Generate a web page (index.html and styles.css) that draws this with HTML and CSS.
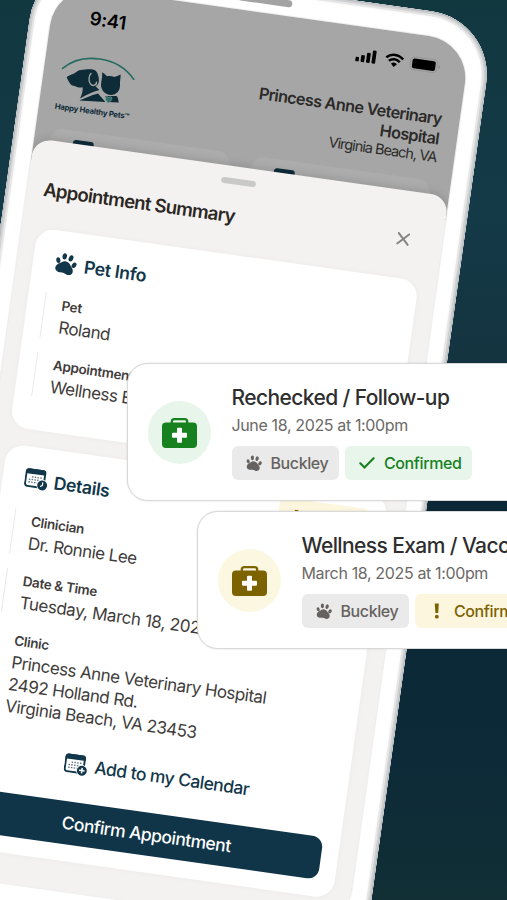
FILE: index.html
```
<!DOCTYPE html>
<html lang="en">
<head>
    <meta charset="UTF-8">
    <meta name="viewport" content="width=device-width, initial-scale=1.0">
    <title>Happy Healthy Pets</title>
    <link rel="stylesheet" href="styles.css">
</head>
<body>
    <!-- shared icons -->
    <svg class="defs" width="0" height="0">
        <symbol id="paw" viewBox="0 0 22 22">
            <g transform="rotate(10 11 11)">
                <ellipse cx="2.7" cy="10" rx="2.1" ry="2.9" transform="rotate(-22 2.7 10)"/>
                <ellipse cx="7.6" cy="4.4" rx="2.2" ry="3.2" transform="rotate(-8 7.6 4.4)"/>
                <ellipse cx="14.2" cy="4.4" rx="2.2" ry="3.2" transform="rotate(8 14.2 4.4)"/>
                <ellipse cx="19.2" cy="10" rx="2.1" ry="2.9" transform="rotate(22 19.2 10)"/>
                <path d="M11 8.800c3.400 0 4.400 2.200 5.900 3.400 1.700 1.300 3.100 2.800 3.100 5 0 2.500-2 4-4.300 4-1.800 0-3-.7-4.700-.7s-2.900.7-4.700.7C4 21.200 2 19.700 2 17.200c0-2.200 1.400-3.700 3.100-5C6.600 11 7.600 8.800 11 8.800z"/>
            </g>
        </symbol>
        <symbol id="medkit" viewBox="0 0 35 30">
            <rect x="9.800" y="1.200" width="15.400" height="8" rx="2.600" fill="none" stroke="currentColor" stroke-width="2.300"/>
            <rect x="0" y="4.500" width="35" height="25.500" rx="4"/>
            <path d="M16 9.800h3a1 1 0 0 1 1 1v4h4a1 1 0 0 1 1 1v3a1 1 0 0 1-1 1h-4v4a1 1 0 0 1-1 1h-3a1 1 0 0 1-1-1v-4h-4a1 1 0 0 1-1-1v-3a1 1 0 0 1 1-1h4v-4a1 1 0 0 1 1-1z" fill="#fff"/>
        </symbol>
        <symbol id="calendar" viewBox="0 0 24 22">
            <rect x="1" y="1.500" width="18.800" height="16.800" rx="2.600" fill="none" stroke="currentColor" stroke-width="1.900"/>
            <path d="M.1 5.800V3.600A3 3 0 0 1 3.100.6h14.600a3 3 0 0 1 3 3v2.200z"/>
            <path d="M7 8.700h10M4.200 11.400h12.800M4.200 14.100h9" fill="none" stroke="currentColor" stroke-width="1.300" stroke-dasharray="1.500 1.300" opacity=".7"/>
            <circle cx="18.300" cy="15.800" r="5.700" fill="#fff"/>
            <circle cx="18.300" cy="15.800" r="5"/>
        </symbol>
    </svg>

    <div class="phone">
        <div class="side-button"></div>
        <div class="speaker"></div>
        <div class="screen">
            <div class="status-bar">
                <span class="time">9:41</span>
                <svg class="status-icons" width="86" height="18" viewBox="0 0 86 18">
                    <rect x="0" y="9.500" width="3.700" height="4.500" rx="1"/>
                    <rect x="5.500" y="7" width="3.700" height="7" rx="1"/>
                    <rect x="11" y="4" width="3.700" height="10" rx="1"/>
                    <rect x="16.500" y="1" width="3.700" height="13" rx="1"/>
                    <g fill="none" stroke="#000" stroke-width="2.500">
                        <path d="M30.500 5.900a12 12 0 0 1 17 0"/>
                        <path d="M33.500 9.100a7.800 7.800 0 0 1 11 0"/>
                    </g>
                    <path d="M36 11.500a4.300 4.300 0 0 1 6 0L39 14.700z"/>
                    <rect x="55.100" y="1.600" width="27" height="13" rx="4" fill="none" stroke="#969696"/>
                    <rect x="57" y="3.300" width="23.400" height="9.800" rx="2"/>
                    <path d="M83.500 6v4.500c1.800-.8 1.800-3.700 0-4.500z" fill="#8c8c8c"/>
                </svg>
            </div>
            <div class="clinic-bar">
                <div class="logo">
                    <svg width="78" height="47" viewBox="0 0 78 47">
                        <path d="M2.500 16C20-3.500 56-3.500 74.500 17" fill="none" stroke="#276a62" stroke-width="1.700" stroke-linecap="round"/>
                        <g transform="translate(-23.800 -9) rotate(-8) scale(.3333)">
                            <!-- dog -->
                            <path d="M80 113c3-6 12-7 22-12 5-2 10-10 20-11 12-1 22-3 32-2 10 1 16 5 19 14 4 12 5 20 2 28-2 5-5 8-9 8l12 12c-20 5-38 14-58 26 6-12 9-24 8-34-8 2-16 0-22-3-4-1-7-1-12-4-6-5-9-13-14-22z" fill="#0e2b38"/>
                            <path d="M154 99c-8 8-9 22-4 31 3 6 9 8 15 5 4-2 5-6 4-10" fill="none" stroke="#a6a6a6" stroke-width="4"/>
                            <!-- dog and cat shoulders -->
                            <path d="M118 182c16-6 34-16 56-21 8 10 16 17 22 25z" fill="#0e2b38"/>
                            <path d="M196 168h34c4 6 5 12 6 20l-34-2z" fill="#0e2b38"/>
                            <!-- cat head -->
                            <path d="M186 97c5 3 11 8 15 12 7-2 15-1 22 2 6-1 12-4 19-7 0 12-3 20-2 32 0 17-11 29-27 29s-29-12-30-29c0-12 5-22 3-39z" fill="#0e2b38"/>
                            <path d="M196 174c1-6 8-5 10-1 3-4 10-3 10 3-1 6-6 9-11 13-5-4-9-9-9-15z" fill="#2b7068" stroke="#a6a6a6" stroke-width="1.500"/>
                        </g>
                    </svg>
                    <span>Happy Healthy Pets™</span>
                </div>
                <div class="clinic-name">
                    <strong>Princess Anne Veterinary<br>Hospital</strong>
                    <span>Virginia Beach, VA</span>
                </div>
            </div>
            <div class="tiles">
                <div class="tile"><i></i></div>
                <div class="tile"><i></i></div>
            </div>

            <div class="sheet">
                <div class="handle"></div>
                <div class="sheet-header">
                    <h1>Appointment Summary</h1>
                    <svg width="13" height="13" viewBox="0 0 13 13"><path d="M1.200 1.200l10.600 10.600M11.800 1.200L1.200 11.800" stroke="#858585" stroke-width="2" stroke-linecap="round"/></svg>
                </div>

                <div class="panel pet-panel">
                    <h2><svg width="22" height="22"><use href="#paw"/></svg><span>Pet Info</span></h2>
                    <div class="field">
                        <label>Pet</label>
                        <p>Roland</p>
                    </div>
                    <div class="field">
                        <label>Appointment Type</label>
                        <p>Wellness Exam</p>
                    </div>
                </div>

                <div class="panel details-panel">
                    <h2>
                        <svg width="24" height="22"><use href="#calendar"/><path d="M18.500 12.800v3.200l-2.200 1.200" fill="none" stroke="#fff" stroke-width="1.200"/></svg>
                        <span>Details</span>
                        <b class="mini-chip">!</b>
                    </h2>
                    <div class="field">
                        <label>Clinician</label>
                        <p>Dr. Ronnie Lee</p>
                    </div>
                    <div class="field">
                        <label>Date &amp; Time</label>
                        <p class="date">Tuesday, March 18, 2025</p>
                    </div>
                    <div class="field last">
                        <label>Clinic</label>
                        <p>Princess Anne Veterinary Hospital<br>2492 Holland Rd.<br>Virginia Beach, VA 23453</p>
                    </div>
                    <div class="add-calendar">
                        <svg width="24" height="22"><use href="#calendar"/><path d="M18.300 13v5.600M15.500 15.800h5.600" stroke="#fff" stroke-width="1.500"/></svg>
                        <span>Add to my Calendar</span>
                    </div>
                    <button class="confirm">Confirm Appointment</button>
                </div>
            </div>
        </div>
    </div>

    <div class="visit visit-green">
        <div class="visit-icon"><svg width="35" height="30"><use href="#medkit"/></svg></div>
        <div class="visit-body">
            <h3>Rechecked / Follow-up</h3>
            <time>June 18, 2025 at 1:00pm</time>
            <div class="chips">
                <span class="chip pet"><svg width="16" height="16"><use href="#paw"/></svg>Buckley</span>
                <span class="chip state"><svg width="16" height="12" viewBox="0 0 16 12"><path d="M1.300 6.300l4.200 4.200L14.600 1.200" fill="none" stroke="currentColor" stroke-width="2.100" stroke-linecap="round"/></svg>Confirmed</span>
            </div>
        </div>
    </div>

    <div class="visit visit-gold">
        <div class="visit-icon"><svg width="35" height="30"><use href="#medkit"/></svg></div>
        <div class="visit-body">
            <h3>Wellness Exam / Vaccines</h3>
            <time>March 18, 2025 at 1:00pm</time>
            <div class="chips">
                <span class="chip pet"><svg width="16" height="16"><use href="#paw"/></svg>Buckley</span>
                <span class="chip state"><svg width="16" height="16" viewBox="0 0 16 16"><path d="M5.800.5h4l-.6 9.500H6.400z"/><circle cx="7.800" cy="13.700" r="1.900"/></svg>Confirm</span>
            </div>
        </div>
    </div>
</body>
</html>
```
FILE: styles.css
```
* {
    box-sizing: border-box;
}

body {
    margin: 0;
    position: relative;
    width: 507px;
    height: 900px;
    overflow: hidden;
    font-family: Inter, "Liberation Sans", sans-serif;
    color: #3f3d3b;
    background: linear-gradient(180deg, #11373f 0%, #143a48 22%, #14333f 42%, #0b2735 58%, #0d2a38 85%, #112f35 100%);
}

h1, h2, h3, p {
    margin: 0;
}

svg {
    display: block;
    flex-shrink: 0;
    fill: currentColor;
}

.defs {
    position: absolute;
}

/* phone */

.phone {
    position: absolute;
    left: 32px;
    top: -49px;
    width: 461px;
    height: 949px;
    padding: 25px 21px;
    border-radius: 64px;
    background: #fff;
    box-shadow: inset 0 0 0 1px #b3b7ba, inset 0 0 0 3px #cfd0d1, inset 0 0 0 5px #e6e6e6, inset 0 0 3px 5px #f3f3f3;
    transform-origin: -32px 49px;
    transform: rotate(8deg);
}

.side-button {
    position: absolute;
    left: -3px;
    top: 270px;
    width: 4px;
    height: 60px;
    border-radius: 2px;
    background: #b9bdc0;
}

.speaker {
    position: absolute;
    left: 203px;
    top: 9px;
    width: 55px;
    height: 7px;
    border-radius: 4px;
    background: #a3a3a3;
}

.screen {
    height: 898px;
    border-radius: 42px;
    overflow: hidden;
    background: linear-gradient(#a6a6a6 180px, #f3f2f1 180px);
    box-shadow: 0 0 0 1px #efefef;
}

.status-bar {
    display: flex;
    justify-content: space-between;
    height: 62px;
    padding: 17px 26px 0 38.5px;
    color: #000;
}

.time {
    font-size: 18.5px;
    font-weight: 600;
    line-height: 24px;
    letter-spacing: -0.2px;
}

.status-icons {
    margin-top: 4px;
}

.clinic-bar {
    display: flex;
    justify-content: space-between;
    height: 81px;
    padding: 3px 18px 0 16px;
}

.logo {
    color: #0e2b38;
}

.logo svg {
    margin-top: 2px;
}

.logo span {
    display: block;
    margin-top: 2px;
    font-size: 7.8px;
    font-weight: 700;
    line-height: 10px;
    letter-spacing: -0.25px;
    white-space: nowrap;
}

.clinic-name {
    padding-top: 5px;
    text-align: right;
    white-space: nowrap;
    color: #2b2a29;
}

.clinic-name strong {
    display: block;
    font-size: 16.3px;
    font-weight: 600;
    line-height: 20px;
    letter-spacing: -0.65px;
}

.clinic-name span {
    display: block;
    font-size: 14.5px;
    line-height: 18px;
    letter-spacing: -0.95px;
}

.tiles {
    display: flex;
    gap: 22px;
    height: 13px;
    padding: 0 20px 0 16px;
}

.tile {
    flex: 1;
    height: 40px;
    padding: 9px 23px;
    border-radius: 12px;
    background: #acacac;
}

.tile i {
    display: block;
    width: 21px;
    height: 10px;
    border-radius: 3px;
    background: #0e2b3a;
}

.sheet {
    position: relative;
    height: 742px;
    padding: 11.5px 18.5px 0 15.5px;
    border-radius: 18px 18px 0 0;
    background: #f3f2f1;
    box-shadow: 0 -2px 8px rgba(0, 0, 0, 0.12);
}

.handle {
    width: 35px;
    height: 6px;
    margin: 0 auto;
    border-radius: 3px;
    background: #c9c9c9;
}

.sheet-header {
    display: flex;
    align-items: center;
    justify-content: space-between;
    height: 24px;
    margin: 19px 15px 27.5px 1px;
}

h1 {
    font-size: 18.6px;
    font-weight: 600;
    letter-spacing: -0.76px;
    color: #2c2723;
    white-space: nowrap;
}

.panel {
    padding: 20px 17px 0;
    border-radius: 18px;
    background: #fff;
    box-shadow: 0 0 6px rgba(0, 0, 0, 0.03);
}

.pet-panel {
    height: 201px;
    margin-bottom: 17px;
}

.details-panel {
    height: 406px;
}

h2 {
    display: flex;
    align-items: center;
    height: 24px;
    margin-bottom: 19px;
    padding-left: 5px;
    color: #12374a;
    font-size: 17.7px;
    font-weight: 600;
    letter-spacing: -0.35px;
}

h2 svg {
    width: 24px;
    margin-right: 6px;
}

.pet-panel h2 svg {
    width: 22px;
    margin-right: 8px;
}

.mini-chip {
    display: block;
    width: 90px;
    height: 34px;
    margin-left: auto;
    padding-left: 15px;
    border-radius: 6px;
    background: #fcf6df;
    color: #7d6200;
    font-size: 17px;
    line-height: 34px;
}

.field {
    margin-bottom: 14.3px;
    padding-left: 17px;
    border-left: 1px solid #e9e9e9;
    white-space: nowrap;
}

.field.last {
    border-left-color: transparent;
}

.field label {
    display: block;
    font-size: 13.5px;
    font-weight: 600;
    line-height: 22px;
    letter-spacing: -0.32px;
}

.field p {
    font-size: 17px;
    line-height: 23.5px;
    letter-spacing: -0.5px;
}

.field p.date {
    letter-spacing: -0.4px;
}

.field.last p {
    line-height: 22px;
}

.add-calendar {
    display: flex;
    align-items: center;
    justify-content: center;
    gap: 6px;
    height: 24px;
    margin: 26px 0 25px 5px;
    color: #12374a;
    font-size: 17.5px;
    font-weight: 500;
    letter-spacing: -0.5px;
}

.confirm {
    display: block;
    width: 100%;
    height: 43px;
    border: none;
    border-radius: 11px;
    background: #103548;
    color: #fff;
    font-family: inherit;
    font-size: 17.5px;
    font-weight: 500;
    letter-spacing: -0.5px;
}

/* visit cards on top of the phone */

.visit {
    position: absolute;
    display: flex;
    width: 480px;
    height: 138px;
    padding: 19px 20px;
    border: 1px solid #d9d9d9;
    border-radius: 21px;
    background: #fff;
    box-shadow: 0 0 2px rgba(0, 0, 0, 0.15);
}

.visit-green {
    left: 127px;
    top: 363px;
}

.visit-gold {
    left: 197px;
    top: 511px;
}

.visit-icon {
    display: flex;
    align-items: center;
    justify-content: center;
    width: 63px;
    height: 63px;
    margin: 18px 20.5px 0 0;
    border-radius: 50%;
}

.visit-green .visit-icon {
    background: #e8f5ea;
    color: #17801f;
}

.visit-gold .visit-icon {
    background: #fbf7e0;
    color: #7d6200;
}

.visit h3 {
    padding-top: 1px;
    font-size: 21px;
    font-weight: 500;
    line-height: 28px;
    letter-spacing: -0.6px;
    color: #2e2e2e;
    white-space: nowrap;
}

.visit time {
    display: block;
    margin-top: 2px;
    font-size: 16px;
    line-height: 22px;
    letter-spacing: -0.36px;
    color: #6c6967;
    white-space: nowrap;
}

.chips {
    display: flex;
    gap: 5.5px;
    margin-top: 10px;
}

.chip {
    display: flex;
    align-items: center;
    height: 34px;
    border-radius: 6px;
    font-size: 16px;
    font-weight: 500;
    letter-spacing: -0.4px;
    white-space: nowrap;
}

.chip.pet {
    width: 107.5px;
    padding-left: 14px;
    background: #ebeaea;
    color: #66625f;
}

.chip svg {
    margin-right: 9px;
}

.chip.state {
    width: 127.5px;
    padding-left: 14.5px;
}

.visit-green .state {
    background: #e8f5ea;
    color: #17801f;
}

.visit-gold .state {
    background: #fcf6df;
    color: #7d6200;
}
```
